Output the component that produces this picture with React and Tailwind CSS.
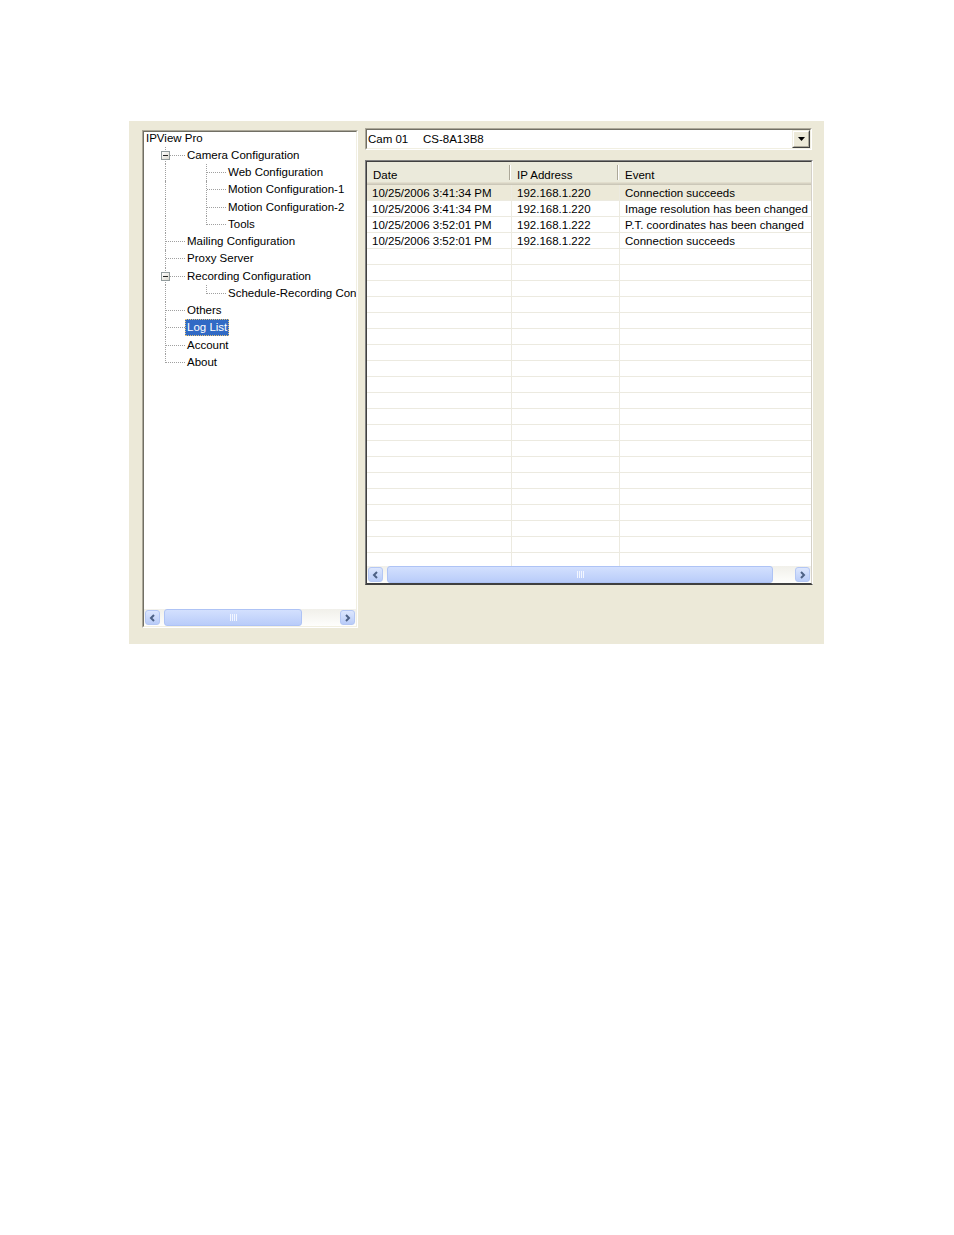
import React from 'react';

const TREE = [
  { label: 'IPView Pro', guides: [] },
  { label: 'Camera Configuration', guides: [['tee', true]] },
  { label: 'Web Configuration', guides: [['pass'], ['tee']] },
  { label: 'Motion Configuration-1', guides: [['pass'], ['tee']] },
  { label: 'Motion Configuration-2', guides: [['pass'], ['tee']] },
  { label: 'Tools', guides: [['pass'], ['elbow']] },
  { label: 'Mailing Configuration', guides: [['tee']] },
  { label: 'Proxy Server', guides: [['tee']] },
  { label: 'Recording Configuration', guides: [['tee', true]] },
  { label: 'Schedule-Recording Con', guides: [['pass'], ['elbow']] },
  { label: 'Others', guides: [['tee']] },
  { label: 'Log List', guides: [['tee']], selected: true },
  { label: 'Account', guides: [['tee']] },
  { label: 'About', guides: [['elbow']] },
];

const LOGS = [
  { date: '10/25/2006 3:41:34 PM', ip: '192.168.1.220', event: 'Connection succeeds' },
  { date: '10/25/2006 3:41:34 PM', ip: '192.168.1.220', event: 'Image resolution has been changed' },
  { date: '10/25/2006 3:52:01 PM', ip: '192.168.1.222', event: 'P.T. coordinates has been changed' },
  { date: '10/25/2006 3:52:01 PM', ip: '192.168.1.222', event: 'Connection succeeds' },
];

function Expander() {
  return (
    <div className="absolute left-[17px] top-[4px] flex h-[9px] w-[9px] items-center justify-center border border-[#919B9C] bg-gradient-to-br from-white to-[#DCDAD0]">
      <div className="h-[1px] w-[5px] bg-[#222]" />
    </div>
  );
}

function Guide({ kind, box }) {
  return (
    <div className="relative flex h-full w-[41px] shrink-0">
      <div className="w-[21px] shrink-0" />
      {kind === 'pass' && <div className="h-full border-l border-dotted border-[#A0A0A0]" />}
      {kind === 'tee' && (
        <div className="h-full w-[20px] border-l border-dotted border-[#A0A0A0]">
          <div className="mt-[8px] border-t border-dotted border-[#A0A0A0]" />
        </div>
      )}
      {kind === 'elbow' && <div className="h-[9px] w-[20px] border-b border-l border-dotted border-[#A0A0A0]" />}
      {box && <Expander />}
    </div>
  );
}

function Chevron({ dir }) {
  return (
    <svg width="7" height="8" viewBox="0 0 7 8">
      <path d={dir === 'left' ? 'M5 1 L2 4 L5 7' : 'M2 1 L5 4 L2 7'} stroke="#4D6185" strokeWidth="2" fill="none" />
    </svg>
  );
}

function ScrollButton({ dir }) {
  return (
    <div className="h-[17px] w-[17px] shrink-0 p-[1px]">
      <div className="flex h-full w-full items-center justify-center rounded-[3px] border border-[#B4C7F4] bg-gradient-to-b from-[#DDE7FE] to-[#B9CCF8]">
        <Chevron dir={dir} />
      </div>
    </div>
  );
}

function HScrollbar({ thumbClass }) {
  return (
    <div className="flex h-[17px] shrink-0 bg-gradient-to-b from-[#F1F0EA] to-[#FEFEFC]">
      <ScrollButton dir="left" />
      <div className={`flex h-full shrink-0 items-center justify-center rounded-[3px] border border-[#AEC3F5] bg-gradient-to-b from-[#D3E0FE] to-[#B9CCF9] ${thumbClass}`}>
        <div className="flex gap-[1px]">
          <div className="h-[7px] w-[1px] bg-[#F2F6FF]" />
          <div className="h-[7px] w-[1px] bg-[#F2F6FF]" />
          <div className="h-[7px] w-[1px] bg-[#F2F6FF]" />
          <div className="h-[7px] w-[1px] bg-[#F2F6FF]" />
        </div>
      </div>
      <div className="flex-1" />
      <ScrollButton dir="right" />
    </div>
  );
}

function TreePanel() {
  return (
    <div className="mt-[2px] h-[498px] w-[216px] shrink-0 border border-b-white border-l-[#ACA899] border-r-white border-t-[#ACA899]">
      <div className="flex h-full flex-col border border-b-[#F1EFE2] border-l-[#716F64] border-r-[#F1EFE2] border-t-[#716F64] bg-white">
        <div className="flex-1 overflow-hidden">
          <div className="-mt-[2.5px] flex flex-col">
            {TREE.map((item) => (
              <div key={item.label} className="flex h-[17.25px] items-center">
                {item.guides.map(([kind, box], i) => (
                  <Guide key={i} kind={kind} box={box} />
                ))}
                <span
                  className={
                    item.selected
                      ? 'whitespace-nowrap border border-dotted border-[#E3C37A] bg-[#316AC5] px-[1px] leading-[15px] text-white'
                      : 'whitespace-nowrap border border-transparent px-[1px] leading-[15px]'
                  }
                >
                  {item.label}
                </span>
              </div>
            ))}
          </div>
        </div>
        <HScrollbar thumbClass="ml-[3px] w-[138px]" />
      </div>
    </div>
  );
}

function ComboBox() {
  return (
    <div className="h-[22px] w-[447px] border border-b-white border-l-[#ACA899] border-r-white border-t-[#ACA899]">
      <div className="flex h-full border border-b-[#F1EFE2] border-l-[#716F64] border-r-[#F1EFE2] border-t-[#716F64] bg-white">
        <div className="flex flex-1 items-center pl-[1px] pt-[1px]">
          <span className="w-[55px]">Cam 01</span>
          <span>CS-8A13B8</span>
        </div>
        <div className="h-[18px] w-[18px] border border-b-[#404040] border-l-[#F1EFE2] border-r-[#404040] border-t-[#F1EFE2]">
          <div className="flex h-full items-center justify-center border border-b-[#ACA899] border-l-white border-r-[#ACA899] border-t-white bg-[#ECE9D8]">
            <svg width="7" height="4" viewBox="0 0 7 4">
              <path d="M0 0 H7 L3.5 4 Z" fill="#000" />
            </svg>
          </div>
        </div>
      </div>
    </div>
  );
}

function HeaderCell({ label, className }) {
  return (
    <div className={`flex h-full items-start ${className}`}>
      <span className="flex-1 whitespace-nowrap pl-[6px] pt-[5px] leading-[16px]">{label}</span>
      <div className="mt-[3px] h-[15px] w-[2px] border-l border-r border-l-[#ACA899] border-r-white" />
    </div>
  );
}

function LogList() {
  const blanks = Array.from({ length: 20 }, (_, i) => i);
  return (
    <div className="mt-[10px] h-[425px] w-[448px] border border-b-[#404040] border-l-[#808080] border-r-white border-t-[#808080]">
      <div className="flex h-full flex-col border border-b-[#404040] border-l-[#404040] border-r-[#D4D0C8] border-t-[#404040] bg-white">
        <div className="shrink-0">
          <div className="flex h-[20px] bg-[#EBEADB]">
            <HeaderCell label="Date" className="w-[144px]" />
            <HeaderCell label="IP Address" className="w-[108px]" />
            <div className="flex-1 pl-[6px] pt-[5px] leading-[16px]">Event</div>
          </div>
          <div className="h-[1px] bg-[#E2DECD]" />
          <div className="h-[1px] bg-[#D6D2C2]" />
          <div className="h-[1px] bg-[#CBC7B8]" />
        </div>
        <div className="flex-1 overflow-hidden">
          {LOGS.map((log, i) => (
            <div key={i} className={`flex h-[16px] border-b border-[#ECEAE0] leading-[17px] ${i === 0 ? 'bg-[#ECE9D8]' : ''}`}>
              <div className="w-[145px] shrink-0 whitespace-nowrap border-r border-[#ECEAE0] pl-[5px]">{log.date}</div>
              <div className="w-[108px] shrink-0 whitespace-nowrap border-r border-[#ECEAE0] pl-[5px]">{log.ip}</div>
              <div className="flex-1 overflow-hidden whitespace-nowrap pl-[5px]">{log.event}</div>
            </div>
          ))}
          {blanks.map((i) => (
            <div key={`b${i}`} className="flex h-[16px] border-b border-[#ECEAE0]">
              <div className="w-[145px] shrink-0 border-r border-[#ECEAE0]" />
              <div className="w-[108px] shrink-0 border-r border-[#ECEAE0]" />
              <div className="flex-1" />
            </div>
          ))}
        </div>
        <HScrollbar thumbClass="ml-[3px] w-[386px]" />
      </div>
    </div>
  );
}

export default function App() {
  return (
    <div className="h-[1235px] w-[954px] bg-white pl-[129px] pt-[121px] font-['Liberation_Sans',Arial,sans-serif] text-[11.5px] text-black">
      <div className="flex h-[523px] w-[695px] gap-[7px] bg-[#ECE9D8] pl-[13px] pt-[7px]">
        <TreePanel />
        <div className="flex w-[448px] flex-col">
          <ComboBox />
          <LogList />
        </div>
      </div>
    </div>
  );
}
